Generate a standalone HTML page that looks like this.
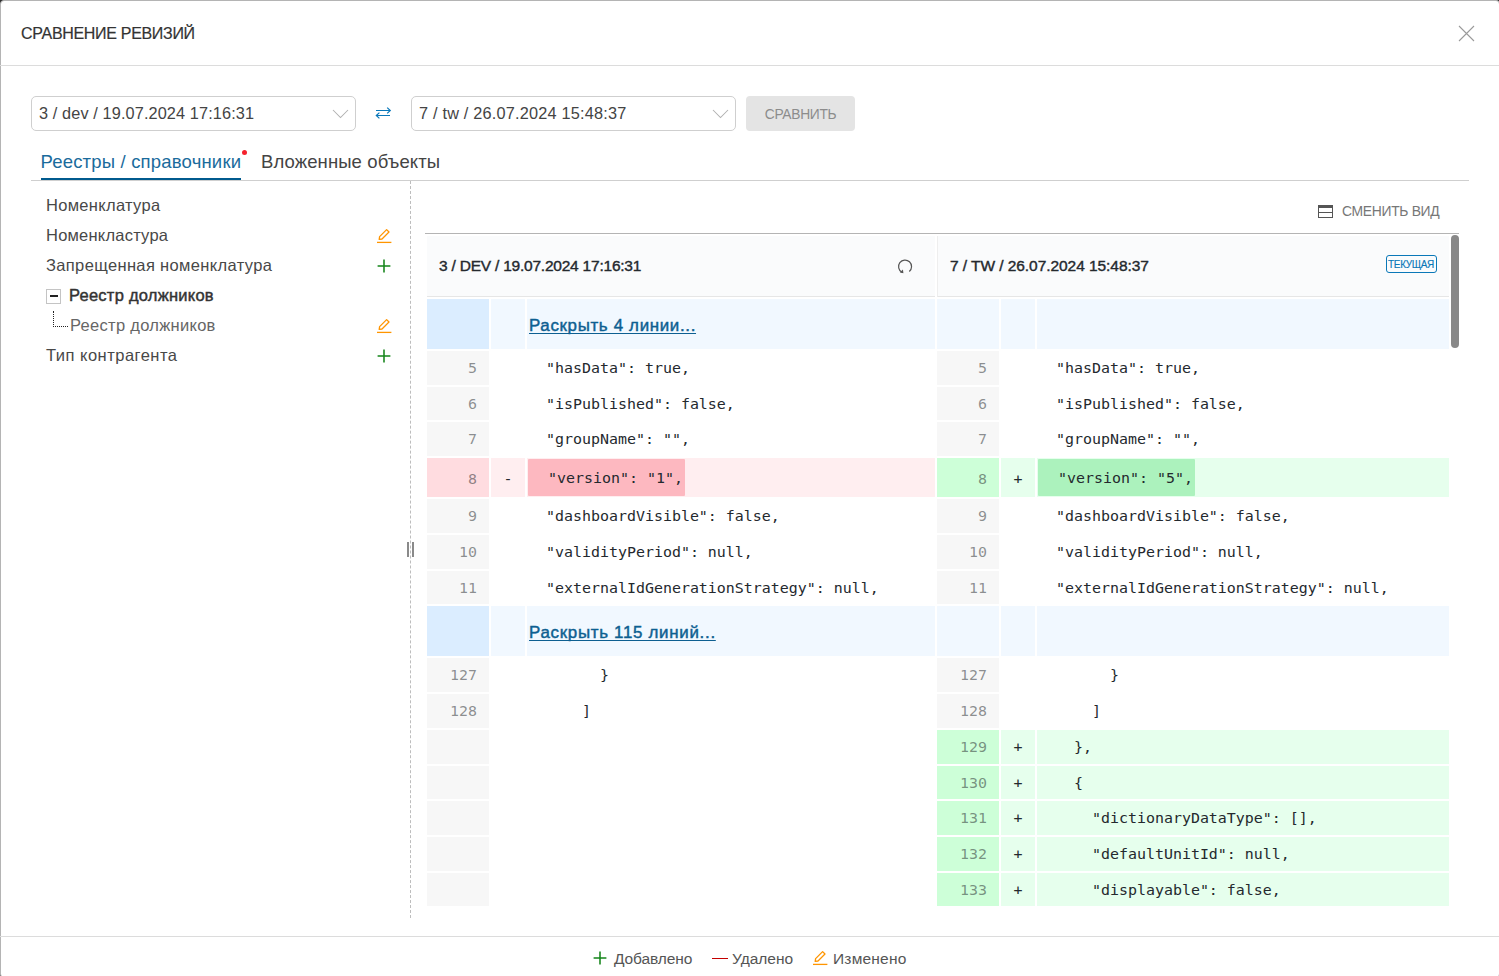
<!DOCTYPE html>
<html lang="ru">
<head>
<meta charset="utf-8">
<title>Сравнение ревизий</title>
<style>
*{box-sizing:border-box;margin:0;padding:0}
html,body{width:1499px;height:976px;overflow:hidden;background:#fff}
.backdrop{position:absolute;left:0;top:0;width:1499px;height:976px;background:#2e2e2e;overflow:hidden}
body{font-family:"Liberation Sans",sans-serif;font-size:16px;color:#444;position:relative}
.modal{position:absolute;left:0;top:0;width:1500px;height:977.5px;background:#fff;border:1px solid #b4b4b4;border-radius:4px}
.abs{position:absolute;white-space:nowrap}
/* header */
.hdr{position:absolute;left:0;top:0;width:1499px;height:66px;border-bottom:1px solid #dcdcdc}
.title{left:21px;top:24px;font-size:16px;line-height:20px;color:#333;-webkit-text-stroke:0.2px #333;text-transform:uppercase}
.close{position:absolute;left:1457.4px;top:24px;width:19px;height:19px}
/* controls */
.select{position:absolute;top:96px;height:35px;width:325px;border:1px solid #cfcfcf;border-radius:5px;background:#fff}
.select .val{position:absolute;left:7px;top:0;line-height:33px;font-size:16.3px;color:#444;white-space:nowrap}
.select svg{position:absolute;right:6px;top:11.5px}
.btn{position:absolute;left:746px;top:96px;width:109px;height:35px;border-radius:4px;background:#e4e4e4;color:#8c8c8c;font-size:13.8px;line-height:37px;text-align:center;text-transform:uppercase}
/* tabs */
.tabs{position:absolute;left:31px;top:143px;width:1438px;height:38px;border-bottom:1px solid #cfcfcf}
.tab{position:absolute;top:0;height:37px;font-size:18.5px;line-height:38px;color:#444;white-space:nowrap}
.tab.active{color:#1a6b9c;border-bottom:2px solid #005a8e}
.dot{position:absolute;width:5px;height:5px;border-radius:50%;background:#f5222d}
/* tree */
.tree{position:absolute;left:31px;top:190px;width:375px}
.node{position:relative;height:30px;line-height:30px;font-size:16.5px;color:#484848;white-space:nowrap}
.node .lbl{position:absolute;left:15px;top:0}
.node .ico{position:absolute;left:345px;top:8px;width:16px;height:16px}
.exp{position:absolute;left:15px;top:9px;width:15px;height:15px;border:1px solid #c4c4c4;background:#fff}
.exp i{position:absolute;left:3px;top:5px;width:8px;height:2px;background:#222}
.elbow{position:absolute;left:22px;top:1px;width:15px;height:16px;border-left:1px dotted #222;border-bottom:1px dotted #222}
/* splitter */
.split{position:absolute;left:410px;top:181px;width:0;height:737px;border-left:1px dashed #bdbdbd}
.grip{position:absolute;top:542px;width:2px;height:15px;background:#8a8a8a}
/* diff */
.view{left:1342px;top:201px;font-size:13.9px;line-height:20px;color:#777;text-transform:uppercase}
.dtop{position:absolute;left:425px;top:233px;width:1034px;height:1px;background:#b4b4b4}
.dh{position:absolute;top:236px;height:61px;width:508px;background:#fafbfc;border-bottom:1px solid #e6e6e6}
.dh.r{border-left:1px solid #eee}
.dh b{position:absolute;left:12px;top:20px;font-size:15.5px;line-height:20px;color:#24292e;font-weight:400;-webkit-text-stroke:0.4px #24292e;white-space:nowrap}
.badge{position:absolute;left:448px;top:19px;width:51px;height:18px;border:1px solid #0a78b8;border-radius:3px;color:#0a78b8;font-size:10px;letter-spacing:-0.35px;line-height:18px;padding-right:1px;-webkit-text-stroke:0.15px #0a78b8;text-align:center;background:#fafbfc}
.scroll{position:absolute;left:1451px;top:235px;width:8px;height:113px;border-radius:4px;background:#888}
.rows{position:absolute;left:427px;top:299px;width:1022px;height:607px;overflow:hidden}
.row{display:flex;height:33.79px;margin-bottom:2px;font-family:"DejaVu Sans Mono","Liberation Mono",monospace;font-size:14.95px;color:#24292e}
.row>div{height:100%;margin-right:2px;white-space:pre;overflow:hidden;padding-top:1px}
.g{width:62px;background:#f7f7f7;text-align:right;padding-right:12px;color:rgba(33,37,41,.5);line-height:33.79px}
.m{width:34px;text-align:center;line-height:33.79px}
.c{width:408px;line-height:33.79px;padding-left:1px}
.row>div.c.last{width:412px;margin-right:0}
.row.fold{height:49.8px}
.row.fold .g{background:#dbedff}
.row.fold .g.rt,.row.fold .m,.row.fold .c{background:#f1f8ff}
.row.fold .c{padding-top:0}
.row.fold a{display:inline-block;margin-left:1px;font-family:"Liberation Sans",sans-serif;font-size:16.9px;font-weight:400;-webkit-text-stroke:0.45px #0d5f91;color:#0d5f91;text-decoration:underline;text-decoration-skip-ink:none;line-height:53px;text-underline-offset:1.5px}
.row.chg{height:38.9px}
.row.chg .g,.row.chg .m,.row.chg .c{line-height:38.9px}
.g.del{background:#ffdce0}.m.del,.c.del{background:#ffeef0}
.g.add{background:#cdffd8}.m.add,.c.add{background:#e6ffed}
.row.chg .c{padding-top:0}
.row.chg .g,.row.chg .m{padding-top:2px}
.w{display:inline-block;height:37.6px;margin-top:0.7px;line-height:37.6px;padding:1px 2px 0 2px;border-radius:1px;vertical-align:top}
.w.del{background:#fdb8c0}.w.add{background:#acf2bd}
.e{background:#fff}
/* footer */
.ftr{position:absolute;left:0;top:936px;width:1499px;height:40px;border-top:1px solid #dcdcdc}
.leg{font-size:15.5px;line-height:20px;color:#555;top:949px}
/*LS*/
#t-title{letter-spacing:-0.312px}
#t-sel1{letter-spacing:0.114px}
#t-sel2{letter-spacing:0.200px}
#t-btn{letter-spacing:-0.314px}
#t-tab1{letter-spacing:0.185px}
#t-tab2{letter-spacing:0.100px}
#t-n1{letter-spacing:0.309px}
#t-n2{letter-spacing:0.217px}
#t-n3{letter-spacing:0.348px}
#t-n4{letter-spacing:0.240px}
#t-n5{letter-spacing:0.293px}
#t-n6{letter-spacing:0.486px}
#t-view{letter-spacing:-0.320px}
#t-h1{letter-spacing:-0.220px}
#t-h2{letter-spacing:-0.060px}
#t-l1{letter-spacing:-0.100px}
#t-l2{letter-spacing:0.000px}
#t-l3{letter-spacing:0.200px}
#t-f1{letter-spacing:0.667px}
#t-f2{letter-spacing:0.710px}
/*ENDLS*/
</style>
</head>
<body>
<div class="backdrop"><div class="modal"></div></div>

<div class="hdr">
  <div class="abs title" id="t-title">Сравнение ревизий</div>
  <svg class="close" viewBox="0 0 19 19"><path d="M2 2 L17 17 M17 2 L2 17" stroke="#9a9a9a" stroke-width="1.1" fill="none"/></svg>
</div>

<div class="select" style="left:31px">
  <span class="val" id="t-sel1">3 / dev / 19.07.2024 17:16:31</span>
  <svg width="17" height="10" viewBox="0 0 17 10"><path d="M1 1 L8.5 8.5 L16 1" stroke="#b0b0b0" stroke-width="1.05" fill="none"/></svg>
</div>
<svg class="abs" style="left:374px;top:105px" width="18" height="16" viewBox="0 0 18 16"><path d="M2 5.5 H16.3 M13.2 2.6 L16.3 5.5 L13.2 8.4 M16 10.5 H2.3 M5.4 7.6 L2.3 10.5 L5.4 13.4" stroke="#0a78ba" stroke-width="1.2" fill="none"/></svg>
<div class="select" style="left:411px">
  <span class="val" id="t-sel2">7 / tw / 26.07.2024 15:48:37</span>
  <svg width="17" height="10" viewBox="0 0 17 10"><path d="M1 1 L8.5 8.5 L16 1" stroke="#b0b0b0" stroke-width="1.05" fill="none"/></svg>
</div>
<div class="btn"><span id="t-btn">Сравнить</span></div>

<div class="tabs">
  <div class="tab active" style="left:9.5px"><span id="t-tab1">Реестры / справочники</span></div>
  <div class="tab" style="left:230px"><span id="t-tab2">Вложенные объекты</span></div>
</div>
<div class="dot" style="left:242px;top:150px"></div>

<div class="tree">
  <div class="node"><span class="lbl" id="t-n1">Номенклатура</span></div>
  <div class="node"><span class="lbl" id="t-n2">Номенкластура</span><svg class="ico" viewBox="0 0 16 16"><path d="M1 14.4 H15.4" stroke="#ff9500" stroke-width="1.3" fill="none"/><path d="M3.2 11.4 L3.6 8.6 L10.6 1.6 L13 4 L6 11 Z" stroke="#ff9500" stroke-width="1.3" fill="none" stroke-linejoin="round"/></svg></div>
  <div class="node"><span class="lbl" id="t-n3">Запрещенная номенклатура</span><svg class="ico" viewBox="0 0 16 16"><path d="M8 1.4 V14.6 M1.6 8 H14.4" stroke="#15851a" stroke-width="1.55" fill="none"/></svg></div>
  <div class="node"><span class="exp"><i></i></span><span class="lbl" id="t-n4" style="left:38px;font-weight:400;-webkit-text-stroke:0.45px #333;color:#333">Реестр должников</span></div>
  <div class="node"><span class="elbow"></span><span class="lbl" id="t-n5" style="left:39px;color:#666">Реестр должников</span><svg class="ico" viewBox="0 0 16 16"><path d="M1 14.4 H15.4" stroke="#ff9500" stroke-width="1.3" fill="none"/><path d="M3.2 11.4 L3.6 8.6 L10.6 1.6 L13 4 L6 11 Z" stroke="#ff9500" stroke-width="1.3" fill="none" stroke-linejoin="round"/></svg></div>
  <div class="node"><span class="lbl" id="t-n6">Тип контрагента</span><svg class="ico" viewBox="0 0 16 16"><path d="M8 1.4 V14.6 M1.6 8 H14.4" stroke="#15851a" stroke-width="1.55" fill="none"/></svg></div>
</div>

<div class="split"></div>
<div class="grip" style="left:407px"></div>
<div class="grip" style="left:412px"></div>

<svg class="abs" style="left:1318px;top:205px" width="15" height="13" viewBox="0 0 15 13"><rect x="0.5" y="0.5" width="14" height="12" fill="none" stroke="#555" stroke-width="1"/><rect x="0" y="0" width="15" height="3" fill="#555"/><rect x="0" y="7" width="15" height="1" fill="#555"/></svg>
<div class="abs view" id="t-view">Сменить вид</div>

<div class="dtop"></div>
<div class="dh" style="left:427px"><b id="t-h1">3 / DEV / 19.07.2024 17:16:31</b>
  <svg class="abs" style="left:470px;top:22px" width="16" height="16" viewBox="0 0 16 16"><path d="M12.3 13.5 A6.5 6.5 0 1 0 4.8 14.2" stroke="#555" stroke-width="1.2" fill="none"/><path d="M5.9 11.6 L6.4 15.2 L2.9 14.6 Z" fill="#555"/></svg>
</div>
<div class="dh r" style="left:937px;width:512px"><b id="t-h2">7 / TW / 26.07.2024 15:48:37</b><span class="badge">ТЕКУЩАЯ</span></div>
<div class="scroll"></div>

<div class="rows" id="rows">
<div class="row fold"><div class="g"></div><div class="m"></div><div class="c"><a id="t-f1">Раскрыть 4 линии...</a></div><div class="g rt"></div><div class="m"></div><div class="c last"></div></div>
<div class="row"><div class="g">5</div><div class="m"> </div><div class="c">  &quot;hasData&quot;: true,</div><div class="g">5</div><div class="m"> </div><div class="c last">  &quot;hasData&quot;: true,</div></div>
<div class="row"><div class="g">6</div><div class="m"> </div><div class="c">  &quot;isPublished&quot;: false,</div><div class="g">6</div><div class="m"> </div><div class="c last">  &quot;isPublished&quot;: false,</div></div>
<div class="row"><div class="g">7</div><div class="m"> </div><div class="c">  &quot;groupName&quot;: &quot;&quot;,</div><div class="g">7</div><div class="m"> </div><div class="c last">  &quot;groupName&quot;: &quot;&quot;,</div></div>
<div class="row chg"><div class="g del">8</div><div class="m del">-</div><div class="c del"><span class="w del">  &quot;version&quot;: &quot;1&quot;,</span></div><div class="g add">8</div><div class="m add">+</div><div class="c last add"><span class="w add">  &quot;version&quot;: &quot;5&quot;,</span></div></div>
<div class="row"><div class="g">9</div><div class="m"> </div><div class="c">  &quot;dashboardVisible&quot;: false,</div><div class="g">9</div><div class="m"> </div><div class="c last">  &quot;dashboardVisible&quot;: false,</div></div>
<div class="row"><div class="g">10</div><div class="m"> </div><div class="c">  &quot;validityPeriod&quot;: null,</div><div class="g">10</div><div class="m"> </div><div class="c last">  &quot;validityPeriod&quot;: null,</div></div>
<div class="row"><div class="g">11</div><div class="m"> </div><div class="c">  &quot;externalIdGenerationStrategy&quot;: null,</div><div class="g">11</div><div class="m"> </div><div class="c last">  &quot;externalIdGenerationStrategy&quot;: null,</div></div>
<div class="row fold"><div class="g"></div><div class="m"></div><div class="c"><a id="t-f2">Раскрыть 115 линий...</a></div><div class="g rt"></div><div class="m"></div><div class="c last"></div></div>
<div class="row"><div class="g">127</div><div class="m"> </div><div class="c">        }</div><div class="g">127</div><div class="m"> </div><div class="c last">        }</div></div>
<div class="row"><div class="g">128</div><div class="m"> </div><div class="c">      ]</div><div class="g">128</div><div class="m"> </div><div class="c last">      ]</div></div>
<div class="row"><div class="g">&nbsp;</div><div class="m e"> </div><div class="c e"></div><div class="g add">129</div><div class="m add">+</div><div class="c last add">    },</div></div>
<div class="row"><div class="g">&nbsp;</div><div class="m e"> </div><div class="c e"></div><div class="g add">130</div><div class="m add">+</div><div class="c last add">    {</div></div>
<div class="row"><div class="g">&nbsp;</div><div class="m e"> </div><div class="c e"></div><div class="g add">131</div><div class="m add">+</div><div class="c last add">      &quot;dictionaryDataType&quot;: [],</div></div>
<div class="row"><div class="g">&nbsp;</div><div class="m e"> </div><div class="c e"></div><div class="g add">132</div><div class="m add">+</div><div class="c last add">      &quot;defaultUnitId&quot;: null,</div></div>
<div class="row"><div class="g">&nbsp;</div><div class="m e"> </div><div class="c e"></div><div class="g add">133</div><div class="m add">+</div><div class="c last add">      &quot;displayable&quot;: false,</div></div>
</div>

<div class="ftr"></div>
<svg class="abs" style="left:592px;top:950px" width="16" height="16" viewBox="0 0 16 16"><path d="M8 1.4 V14.6 M1.6 8 H14.4" stroke="#15851a" stroke-width="1.55" fill="none"/></svg>
<div class="abs leg" id="t-l1" style="left:614px">Добавлено</div>
<div class="abs" style="left:712px;top:958px;width:16px;height:1px;background:#c40000"></div>
<div class="abs leg" id="t-l2" style="left:732px">Удалено</div>
<svg class="abs" style="left:812px;top:950px" width="16" height="16" viewBox="0 0 16 16"><path d="M1 14.4 H15.4" stroke="#ff9500" stroke-width="1.3" fill="none"/><path d="M3.2 11.4 L3.6 8.6 L10.6 1.6 L13 4 L6 11 Z" stroke="#ff9500" stroke-width="1.3" fill="none" stroke-linejoin="round"/></svg>
<div class="abs leg" id="t-l3" style="left:833px">Изменено</div>

</body>
</html>
